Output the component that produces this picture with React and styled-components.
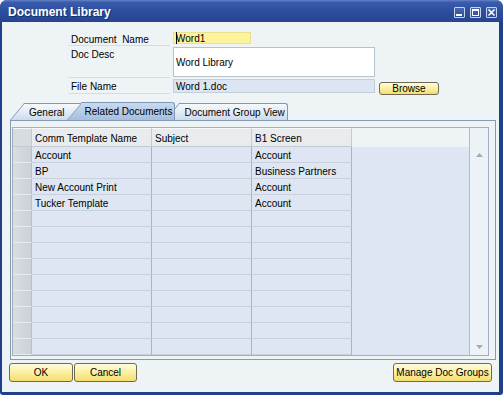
import React from 'react';
import styled, { createGlobalStyle } from 'styled-components';

const GlobalStyle = createGlobalStyle`
  body {
    margin: 0;
    background: #ffffff;
    font-family: "Liberation Sans", Arial, sans-serif;
  }
`;

const Window = styled.div`
  width: 503px;
  height: 395px;
  display: flex;
  flex-direction: column;
  background: #21408c;
  border-radius: 7px 7px 3px 3px;
  overflow: hidden;
`;

const TitleBar = styled.div`
  height: 22px;
  flex: none;
  box-sizing: border-box;
  display: flex;
  align-items: center;
  padding: 2px 6px 0 8px;
  background: linear-gradient(to bottom, #6383cb 0%, #3a5cab 10%, #2d4e9f 50%, #25458f 100%);
`;

const Title = styled.div`
  flex: 1;
  color: #ffffff;
  font-size: 12px;
  font-weight: bold;
  text-shadow: 1px 1px 0 #14306e;
`;

const Controls = styled.div`
  display: flex;
  gap: 5px;
`;

const CtrlBox = styled.span`
  width: 11px;
  height: 11px;
  box-sizing: border-box;
  border: 1px solid #c5d2ee;
  border-radius: 1px;
  background: linear-gradient(to bottom, #4667b6, #2b4c9c);
  display: flex;
  align-items: center;
  justify-content: center;
  svg {
    display: block;
  }
`;

const Body = styled.div`
  flex: 1;
  margin: 0 4px 3px 2px;
  background: #eef4f6;
  padding-top: 10px;
  display: flex;
  flex-direction: column;
`;

const Form = styled.div`
  margin-left: 66px;
  display: flex;
  flex-direction: column;
  gap: 1px;
`;

const Row = styled.div`
  display: flex;
  align-items: flex-start;
  height: ${(p) => p.$h}px;
`;

const Label = styled.div`
  width: 102px;
  height: 100%;
  box-sizing: border-box;
  padding: ${(p) => (p.$top ? '2px 0 0 3px' : '1px 0 0 3px')};
  margin-right: 3px;
  border-bottom: 1px solid #d3dde4;
  display: flex;
  align-items: ${(p) => (p.$top ? 'flex-start' : 'center')};
  font-size: 10px;
  color: #000;
  white-space: pre;
`;

const Field = styled.div`
  width: ${(p) => p.$w}px;
  height: ${(p) => p.$h}px;
  box-sizing: border-box;
  padding-left: 2px;
  display: flex;
  align-items: center;
  font-size: 10px;
  color: #000;
  background: ${(p) => p.$bg};
  border: 1px solid ${(p) => p.$line};
`;

const Caret = styled.span`
  display: inline-block;
  width: 1px;
  height: 12px;
  background: #000;
  margin-right: -1px;
`;

const YellowButton = styled.button`
  width: ${(p) => p.$w}px;
  height: ${(p) => p.$h}px;
  margin-top: ${(p) => p.$mt || 0}px;
  margin-left: ${(p) => p.$ml || 0}px;
  box-sizing: border-box;
  padding: 0;
  border: 1px solid #6f6a55;
  border-radius: 3px;
  background: linear-gradient(to bottom, #fffce0 0%, #fcf1a6 45%, #f4dc6f 100%);
  font-family: "Liberation Sans", Arial, sans-serif;
  font-size: 10px;
  color: #000;
  line-height: 1;
`;

const TabStrip = styled.div`
  display: flex;
  align-items: flex-end;
  height: 18px;
  margin: 8px 0 0 8px;
`;

const Tab = styled.div`
  position: relative;
  z-index: ${(p) => (p.$active ? 3 : 1)};
  height: ${(p) => (p.$active ? 18 : 17)}px;
  box-sizing: border-box;
  padding: 1px ${(p) => (p.$covered ? 18 : 3)}px 0 ${(p) => (p.$active ? 18 : 19)}px;
  margin-right: ${(p) => (p.$covered ? -16 : -10)}px;
  display: flex;
  align-items: center;
  font-size: 10px;
  color: #000;
  white-space: nowrap;
  --tab-bg: ${(p) =>
    p.$active
      ? 'linear-gradient(to bottom, #c9daef 0%, #b3c9e6 60%, #a6bfe0 100%)'
      : 'linear-gradient(to bottom, #f6f9fb 0%, #e2eaf3 55%, #cddaea 100%)'};
  &::before {
    content: '';
    position: absolute;
    left: 0;
    bottom: 0;
    width: 24px;
    height: 100%;
    box-sizing: border-box;
    background: var(--tab-bg);
    border-left: 1px solid #7f97b8;
    border-top: 1px solid #7f97b8;
    transform-origin: bottom left;
    transform: skewX(-40deg);
    z-index: -1;
  }
  &::after {
    content: '';
    position: absolute;
    left: 14px;
    right: 0;
    top: 0;
    bottom: 0;
    background: var(--tab-bg);
    border-top: 1px solid #7f97b8;
    border-right: 1px solid #7f97b8;
    border-top-right-radius: 3px;
    z-index: -1;
  }
`;

const Panel = styled.div`
  width: 486px;
  height: 240px;
  box-sizing: border-box;
  margin-left: 8px;
  border: 1px solid #8699b2;
  background: #eef3f6;
  padding: 6px 6px 3px 1px;
`;

const Grid = styled.div`
  display: grid;
  grid-template-columns: 19px 120px 100px 100px 1fr 19px;
  grid-template-rows: 19px repeat(13, 16px);
  border: 1px solid #a2afbe;
  background: #dde6f2;
`;

const HeadCell = styled.div`
  box-sizing: border-box;
  padding: 1px 0 0 3px;
  display: flex;
  align-items: center;
  font-size: 10px;
  color: #000;
  background: ${(p) => (p.$corner ? '#d7dce1' : '#e9ecee')};
  border-right: 1px solid #c3cad2;
  border-bottom: 1px solid #c3cad2;
  border-top: 1px solid #f7f8f9;
`;

const HeadFiller = styled.div`
  grid-column: 5;
  grid-row: 1;
  background: #eef3f6;
`;

const RowHead = styled.div`
  background: linear-gradient(to right, #d9dde2, #cbd1d8);
  border-right: 1px solid #b9c2cc;
  border-bottom: 1px solid #e7ebef;
`;

const Cell = styled.div`
  box-sizing: border-box;
  padding: 2px 0 0 3px;
  display: flex;
  align-items: center;
  font-size: 10px;
  color: #000;
  white-space: nowrap;
  overflow: hidden;
  border-right: 1px solid #abb5c1;
  border-bottom: 1px solid #c8d1dc;
`;

const RowFiller = styled.div`
  grid-column: 5;
  grid-row: 2 / span 13;
  background: #dde6f2;
`;

const Scrollbar = styled.div`
  grid-column: 6;
  grid-row: 1 / -1;
  background: #edf2f6;
  border-left: 1px solid #b3bdc8;
  padding-top: 19px;
  display: flex;
  flex-direction: column;
  justify-content: space-between;
`;

const ArrowBtn = styled.div`
  height: 16px;
  display: flex;
  align-items: center;
  justify-content: center;
  svg {
    display: block;
  }
`;

const Footer = styled.div`
  display: flex;
  gap: 1px;
  margin-top: 3px;
  padding: 0 7px;
`;

const Spacer = styled.div`
  flex: 1;
`;

const rows = [
  ['Account', '', 'Account'],
  ['BP', '', 'Business Partners'],
  ['New Account Print', '', 'Account'],
  ['Tucker Template', '', 'Account'],
  ...Array.from({ length: 9 }, () => ['', '', '']),
];

const Triangle = ({ up }) => (
  <svg width="7" height="4" viewBox="0 0 7 4">
    <polygon points={up ? '0,4 7,4 3.5,0' : '0,0 7,0 3.5,4'} fill="#a3abb4" />
  </svg>
);

export default function App() {
  return (
    <>
      <GlobalStyle />
      <Window>
        <TitleBar>
          <Title>Document Library</Title>
          <Controls>
            <CtrlBox>
              <svg width="9" height="9" viewBox="0 0 9 9">
                <rect x="1" y="6" width="6" height="2" fill="#fff" />
              </svg>
            </CtrlBox>
            <CtrlBox>
              <svg width="9" height="9" viewBox="0 0 9 9">
                <rect x="1.5" y="1.5" width="6" height="6" fill="none" stroke="#fff" />
                <rect x="1" y="1" width="7" height="2" fill="#fff" />
              </svg>
            </CtrlBox>
            <CtrlBox>
              <svg width="9" height="9" viewBox="0 0 9 9">
                <path d="M1.5 1.5 L7.5 7.5 M7.5 1.5 L1.5 7.5" stroke="#fff" strokeWidth="1.6" />
              </svg>
            </CtrlBox>
          </Controls>
        </TitleBar>
        <Body>
          <Form>
            <Row $h={14}>
              <Label>{'Document  Name'}</Label>
              <Field $w={78} $h={12} $bg="#fbf49c" $line="#ebe08e">
                <Caret />
                Word1
              </Field>
            </Row>
            <Row $h={31}>
              <Label $top>Doc Desc</Label>
              <Field $w={202} $h={30} $bg="#ffffff" $line="#b8c2cc">
                Word Library
              </Field>
            </Row>
            <Row $h={15}>
              <Label>File Name</Label>
              <Field $w={202} $h={14} $bg="#dce6f3" $line="#c3cedb">
                Word 1.doc
              </Field>
              <YellowButton $w={60} $h={13} $mt={3} $ml={4}>
                Browse
              </YellowButton>
            </Row>
          </Form>

          <TabStrip>
            <Tab $covered>General</Tab>
            <Tab $active>Related Documents</Tab>
            <Tab>Document Group View</Tab>
          </TabStrip>

          <Panel>
            <Grid>
              <HeadCell $corner />
              <HeadCell>Comm Template Name</HeadCell>
              <HeadCell>Subject</HeadCell>
              <HeadCell>B1 Screen</HeadCell>
              <HeadFiller />
              <Scrollbar>
                <ArrowBtn>
                  <Triangle up />
                </ArrowBtn>
                <ArrowBtn>
                  <Triangle />
                </ArrowBtn>
              </Scrollbar>
              <RowFiller />
              {rows.map((r, i) => (
                <React.Fragment key={i}>
                  <RowHead />
                  <Cell>{r[0]}</Cell>
                  <Cell>{r[1]}</Cell>
                  <Cell>{r[2]}</Cell>
                </React.Fragment>
              ))}
            </Grid>
          </Panel>

          <Footer>
            <YellowButton $w={64} $h={19}>OK</YellowButton>
            <YellowButton $w={63} $h={19}>Cancel</YellowButton>
            <Spacer />
            <YellowButton $w={99} $h={19}>Manage Doc Groups</YellowButton>
          </Footer>
        </Body>
      </Window>
    </>
  );
}
